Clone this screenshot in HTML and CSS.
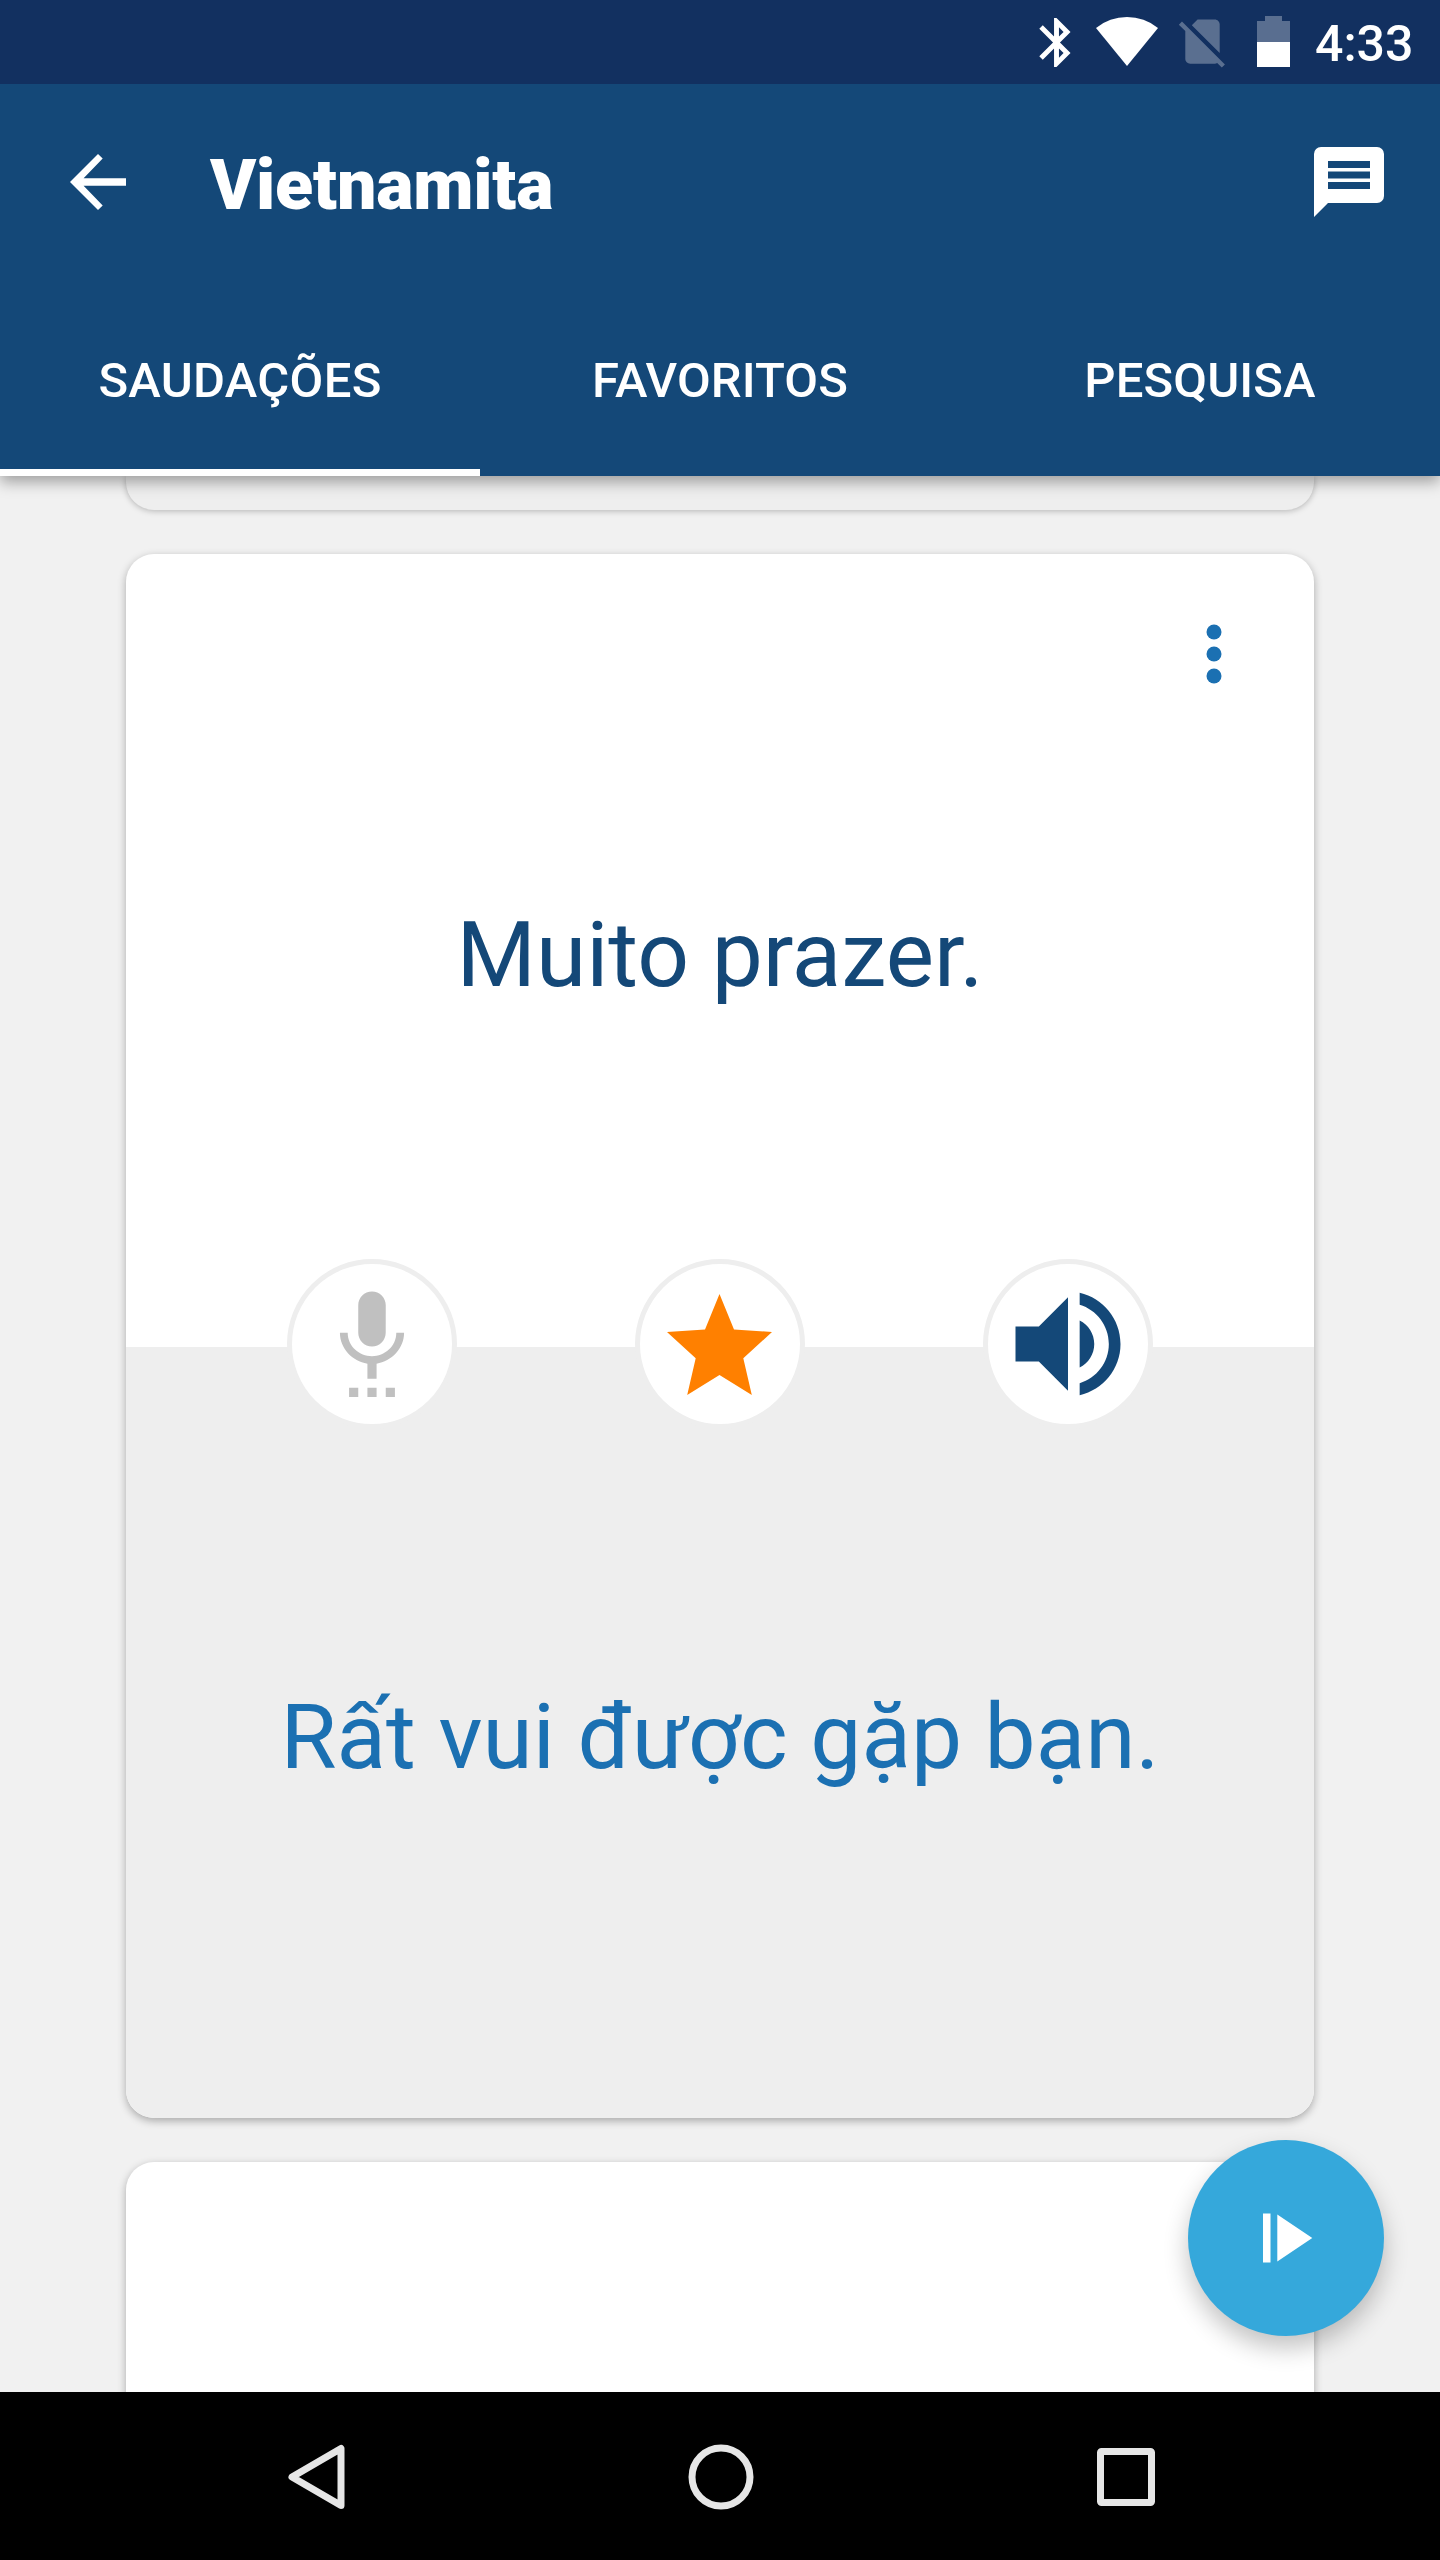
FILE: index.html
```html
<!DOCTYPE html>
<html lang="pt">
<head>
  <meta charset="UTF-8" />
  <meta name="viewport" content="width=device-width, initial-scale=1.0"/>
  <title>Vietnamita</title>
  <link rel="stylesheet" href="styles.css">
</head>
<body>
  <div class="screen">
    <header class="header">
      <div class="status-bar">
        <svg class="status-bluetooth" viewBox="0 0 24 24"><path d="M17.71 7.71L12 2h-1v7.59L6.41 5 5 6.41 10.59 12 5 17.59 6.41 19 11 14.41V22h1l5.71-5.71-4.3-4.29 4.3-4.29zM13 5.83l1.88 1.88L13 9.59V5.83zm1.88 10.46L13 18.17v-3.76l1.88 1.88z"/></svg>
        <svg class="status-wifi" viewBox="0 0 62 49"><path d="M0 11A49.2 49.2 0 0 1 62 11L31 49z"/></svg>
        <svg class="status-sim" viewBox="0 0 24 24"><path d="M18.99 5c0-1.1-.89-2-1.99-2h-7L7.66 5.34 19 16.68 18.99 5zM3.65 3.88L2.38 5.15 5 7.77V19c0 1.1.9 2 2 2h10.01c.35 0 .67-.1.96-.26l1.88 1.88 1.27-1.27L3.65 3.88z"/></svg>
        <svg class="status-battery" viewBox="0 0 33 51"><path opacity=".3" d="M8 0h17v5h8v21H0V5h8z"/><path d="M0 26h33v25H0z"/></svg>
        <span class="time">4:33</span>
      </div>

      <div class="toolbar">
        <svg class="back" viewBox="0 0 56 56"><path d="M56 24.2H13.6L32.7 4.6 28 0 0 28l28 28 4.7-4.6-19.1-19.6H56z"/></svg>
        <h1 class="title">Vietnamita</h1>
        <svg class="chat" viewBox="0 0 70 70"><path fill-rule="evenodd" d="M7 0h56a7 7 0 0 1 7 7v42a7 7 0 0 1-7 7H14L0 70V7a7 7 0 0 1 7-7zM14 14v7h42v-7zM14 24.5v7h42v-7zM14 35v7h42v-7z"/></svg>
      </div>

      <nav class="tabs">
        <div class="tab active">SAUDAÇÕES</div>
        <div class="tab">FAVORITOS</div>
        <div class="tab">PESQUISA</div>
      </nav>
    </header>

    <main class="phrases">
      <div class="card card-previous"></div>

      <div class="card">
        <div class="phrase source">
          <svg class="more" viewBox="0 0 16 60"><circle cx="8" cy="8" r="7.5"/><circle cx="8" cy="30" r="7.5"/><circle cx="8" cy="52" r="7.5"/></svg>
          Muito prazer.
        </div>
        <div class="phrase translation">Rất vui được gặp bạn.</div>

        <div class="actions">
          <div class="action">
            <svg class="icon-mic" viewBox="0 0 24 24"><path d="M7 24h2v-2H7v2zm5-11c1.66 0 2.99-1.34 2.99-3L15 4c0-1.66-1.34-3-3-3S9 2.34 9 4v6c0 1.66 1.34 3 3 3zm-1 11h2v-2h-2v2zm4 0h2v-2h-2v2zm4-14h-1.7c0 3-2.54 5.1-5.3 5.1S6.7 13 6.7 10H5c0 3.41 2.72 6.23 6 6.72V20h2v-3.28c3.28-.49 6-3.31 6-6.72z"/></svg>
          </div>
          <div class="action">
            <svg class="icon-star" viewBox="0 0 105 101"><path d="M52.5 0L67 35.4l38 2.6-28.7 26.3 8.5 36.7-32.3-20-32.3 20 8.5-36.7L0 38l38-2.6z"/></svg>
          </div>
          <div class="action">
            <svg class="icon-volume" viewBox="0 0 24 24"><path d="M3 9v6h4l5 5V4L7 9H3zm13.5 3c0-1.77-1.02-3.29-2.5-4.03v8.05c1.48-.73 2.5-2.25 2.5-4.02zM14 3.23v2.06c2.89.86 5 3.54 5 6.71s-2.11 5.85-5 6.71v2.06c4.01-.91 7-4.49 7-8.77s-2.99-7.86-7-8.77z"/></svg>
          </div>
        </div>
      </div>

      <div class="card card-next"></div>

      <div class="fab">
        <svg class="icon-play" viewBox="0 0 50 50"><path d="M0 .5h7.5v49H0zM14.3 1.5l35 23.5-35 23.5z"/></svg>
      </div>
    </main>

    <footer class="nav-bar">
      <svg viewBox="0 0 66 66"><path d="M58 4.5v57L9 33z"/></svg>
      <svg viewBox="0 0 66 66"><circle cx="33" cy="33" r="29"/></svg>
      <svg viewBox="0 0 66 66"><rect x="7.5" y="7.5" width="51" height="51" rx="1"/></svg>
    </footer>
  </div>
</body>
</html>
```
FILE: styles.css
```css
* {
  box-sizing: border-box;
}

body {
  margin: 0;
  font-family: Roboto, sans-serif;
  background: #f1f1f1;
}

svg {
  display: block;
  flex: none;
  overflow: visible;
}

.screen {
  width: 1440px;
  height: 2560px;
  display: flex;
  flex-direction: column;
  overflow: hidden;
}

/* header */
.header {
  position: relative;
  z-index: 1;
  height: 476px;
  flex: none;
  background: #144878;
  color: #fff;
  fill: #fff;
  box-shadow: 0 6px 14px rgba(0, 0, 0, 0.34);
}

.status-bar {
  height: 84px;
  display: flex;
  justify-content: flex-end;
  background: #123060;
}

.status-bluetooth {
  width: 59px;
  height: 59px;
  margin: 13px 10px 0 0;
}

.status-wifi {
  width: 62px;
  height: 49px;
  margin: 17px 15px 0 0;
}

.status-sim {
  width: 59px;
  height: 59px;
  margin: 12px 25px 0 0;
  opacity: 0.3;
}

.status-battery {
  width: 33px;
  height: 51px;
  margin: 16px 25px 0 0;
}

.time {
  width: 125px;
  padding-top: 15px;
  font-size: 50px;
  font-weight: 500;
  line-height: 58px;
}

.toolbar {
  height: 196px;
  display: flex;
  align-items: center;
  padding: 0 56px 0 70px;
}

.back {
  width: 56px;
  height: 56px;
}

.title {
  flex: 1;
  margin: 6px 0 0 84px;
  font-size: 70px;
  font-weight: 900;
  line-height: 82px;
  letter-spacing: -0.2px;
}

.chat {
  width: 70px;
  height: 70px;
}

.tabs {
  display: flex;
  height: 196px;
}

.tab {
  flex: 1;
  padding-top: 5px;
  text-align: center;
  font-size: 49px;
  font-weight: 500;
  line-height: 192px;
  letter-spacing: 0.1px;
}

.tab.active {
  height: 196px;
  border-bottom: 7px solid #fff;
  letter-spacing: 0.3px;
}

/* phrase list */
.phrases {
  position: relative;
  flex: none;
  height: 1916px;
  padding: 0 126px;
  display: flex;
  flex-direction: column;
  gap: 44px;
  overflow: hidden;
}

.card {
  position: relative;
  flex: none;
  height: 1564px;
  border-radius: 28px;
  background: #fff;
  box-shadow: 0 3px 8px rgba(0, 0, 0, 0.3);
}

.card-previous {
  height: 34px;
  border-radius: 0 0 28px 28px;
  background: #eee;
  box-shadow: 0 1px 6px rgba(0, 0, 0, 0.26);
}

.card-next {
  height: 400px;
}

.phrase {
  position: relative;
  display: flex;
  align-items: center;
  justify-content: center;
  padding-top: 9px;
  font-size: 91px;
}

.source {
  height: 793px;
  color: #144878;
}

.translation {
  height: 771px;
  border-radius: 0 0 28px 28px;
  background: #eee;
  color: #1b70b2;
}

.more {
  position: absolute;
  top: 70px;
  right: 92px;
  width: 16px;
  height: 60px;
  fill: #1b70b2;
}

/* round buttons over the middle of the card */
.actions {
  position: absolute;
  top: 705px;
  left: 0;
  width: 100%;
  display: flex;
  justify-content: center;
  gap: 178px;
}

.action {
  width: 170px;
  height: 170px;
  display: flex;
  align-items: center;
  justify-content: center;
  border: 5px solid #eee;
  border-radius: 50%;
  background: #fff;
}

.icon-mic {
  width: 110px;
  height: 110px;
  margin-right: 1px;
  margin-bottom: 5px;
  fill: #c0c0c0;
}

.icon-star {
  width: 105px;
  height: 101px;
  margin-right: 1px;
  fill: #ff8000;
}

.icon-volume {
  width: 140px;
  height: 140px;
  margin-right: 1px;
  fill: #144878;
}

.fab {
  position: absolute;
  right: 56px;
  bottom: 56px;
  width: 196px;
  height: 196px;
  display: flex;
  align-items: center;
  justify-content: center;
  border-radius: 50%;
  background: #35a8db;
  box-shadow: 0 12px 24px rgba(0, 0, 0, 0.24);
}

.icon-play {
  width: 50px;
  height: 50px;
  margin-left: 4px;
  fill: #fff;
}

/* system navigation */
.nav-bar {
  height: 168px;
  display: flex;
  justify-content: center;
  align-items: center;
  gap: 339px;
  padding: 1px 0 0 1px;
  background: #000;
}

.nav-bar svg {
  width: 66px;
  height: 66px;
  fill: none;
  stroke: #e6e6e6;
  stroke-width: 7;
  stroke-linejoin: round;
}
```
